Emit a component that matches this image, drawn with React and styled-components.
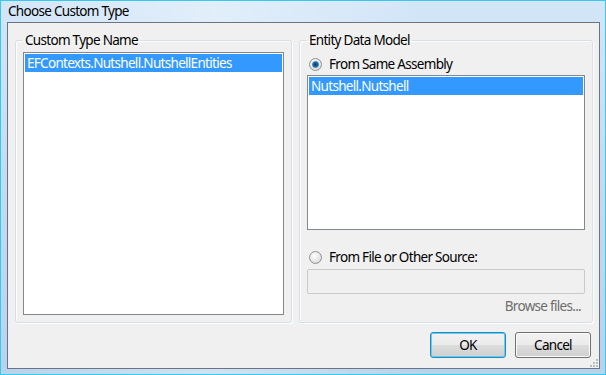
import React from 'react';
import styled, { createGlobalStyle } from 'styled-components';

const GlobalStyle = createGlobalStyle`
  html, body { margin: 0; padding: 0; background: #ffffff; }
  * { box-sizing: border-box; }
  body {
    font-family: "Noto Sans", "DejaVu Sans", sans-serif;
    font-size: 13.5px;
    letter-spacing: -0.7px;
    color: #000;
  }
`;

const App = () => {
  return (
    <>
      <GlobalStyle />
      <Frame>
        <TitleBar>Choose Custom Type</TitleBar>
        <Client>
          <Groups>
            <Group>
              <Legend>Custom Type Name</Legend>
              <ListBox>
                <ListItem $selected>EFContexts.Nutshell.NutshellEntities</ListItem>
              </ListBox>
            </Group>

            <Group>
              <Legend>Entity Data Model</Legend>
              <RadioRow $top={6}>
                <Radio $checked />
                <span>From Same Assembly</span>
              </RadioRow>
              <ListBox $gap={2}>
                <ListItem $selected>Nutshell.Nutshell</ListItem>
              </ListBox>
              <RadioRow $top={18}>
                <Radio />
                <span>From File or Other Source:</span>
              </RadioRow>
              <TextBox />
              <BrowseRow>Browse files...</BrowseRow>
            </Group>
          </Groups>

          <ButtonRow>
            <Button $default>OK</Button>
            <Button>Cancel</Button>
          </ButtonRow>

          <SizeGrip width="8" height="8" viewBox="0 0 8 8">
            <rect x="6" y="0" width="2" height="2" fill="#b8bec6" />
            <rect x="3" y="3" width="2" height="2" fill="#b8bec6" />
            <rect x="6" y="3" width="2" height="2" fill="#b8bec6" />
            <rect x="0" y="6" width="2" height="2" fill="#b8bec6" />
            <rect x="3" y="6" width="2" height="2" fill="#b8bec6" />
            <rect x="6" y="6" width="2" height="2" fill="#b8bec6" />
          </SizeGrip>
        </Client>
      </Frame>
    </>
  );
};

export default App;

// window chrome
const Frame = styled.div`
  width: 606px;
  height: 375px;
  border: 1px solid #36c9f0;
  padding: 0 5px 5px 6px;
  display: flex;
  flex-direction: column;
  background:
    linear-gradient(90deg, rgba(255,255,255,0) 0%, rgba(255,255,255,0.35) 35%, rgba(255,255,255,0) 70%),
    linear-gradient(180deg, #d3e6f8 0%, #c2dbf1 50%, #b7d3ec 100%);
`;

const TitleBar = styled.div`
  height: 21px;
  line-height: 21px;
  padding-left: 1px;
  color: #000;
  white-space: nowrap;
`;

const Client = styled.div`
  position: relative;
  flex: 1;
  border: 1px solid #6b7480;
  background: #f0f0f0;
  padding: 8px 6px 10px 7px;
  display: flex;
  flex-direction: column;
`;

const Groups = styled.div`
  height: 292px;
  display: grid;
  grid-template-columns: 277px 294px;
  column-gap: 7px;
`;

const Group = styled.fieldset`
  margin: 0;
  min-width: 0;
  padding: 0 7px 7px;
  border: 1px solid #d5dfe5;
  border-radius: 3px;
  box-shadow: inset 1px 1px 0 #ffffff, 1px 1px 0 #ffffff;
  display: flex;
  flex-direction: column;
`;

const Legend = styled.legend`
  padding: 0 2px;
  margin-left: 0;
  line-height: 18px;
  color: #000;
  white-space: nowrap;
`;

const ListBox = styled.div`
  flex: 1;
  margin-top: ${p => (p.$gap ?? 3)}px;
  border: 1px solid #828790;
  background: #ffffff;
  padding: 1px;
`;

const ListItem = styled.div`
  height: 18px;
  line-height: 18px;
  padding-left: 2px;
  white-space: nowrap;
  background: ${p => (p.$selected ? '#3399ff' : 'transparent')};
  color: ${p => (p.$selected ? '#ffffff' : '#000000')};
`;

const RadioRow = styled.div`
  margin-top: ${p => p.$top}px;
  height: 18px;
  display: flex;
  align-items: center;
  gap: 7px;
  padding-left: 2px;
  white-space: nowrap;
`;

const Radio = styled.span`
  position: relative;
  flex: none;
  width: 13px;
  height: 13px;
  border-radius: 50%;
  border: 1px solid #929292;
  background: radial-gradient(circle at 40% 35%, #ffffff 0%, #e6e6e6 55%, #cfcfcf 100%);

  &::after {
    content: '';
    display: ${p => (p.$checked ? 'block' : 'none')};
    position: absolute;
    left: 2px;
    top: 2px;
    width: 7px;
    height: 7px;
    border-radius: 50%;
    background: radial-gradient(circle at 50% 50%, #0d3a66 0%, #1c5e9a 40%, #5fa8df 75%, #a9d6f5 100%);
  }
`;

const TextBox = styled.div`
  margin-top: 3px;
  height: 25px;
  border: 1px solid #c7c9cc;
  border-radius: 2px;
  background: #f0f0f0;
`;

const BrowseRow = styled.div`
  margin-top: 3px;
  height: 18px;
  line-height: 18px;
  text-align: right;
  padding-right: 4px;
  color: #6d6d6d;
`;

const ButtonRow = styled.div`
  margin-top: 9px;
  display: flex;
  justify-content: flex-end;
  gap: 9px;
  padding-right: 2px;
`;

const Button = styled.div`
  width: 76px;
  height: 26px;
  display: flex;
  align-items: center;
  justify-content: center;
  border-radius: 3px;
  border: 1px solid ${p => (p.$default ? '#3c7fb1' : '#707070')};
  box-shadow: inset 0 0 0 1px ${p => (p.$default ? '#48d8fb' : '#fbfbfb')};
  background: linear-gradient(180deg, #f2f2f2 0%, #ebebeb 49%, #dddddd 50%, #cfcfcf 100%);
  color: #000;
`;

const SizeGrip = styled.svg`
  position: absolute;
  right: 1px;
  bottom: 1px;
`;
